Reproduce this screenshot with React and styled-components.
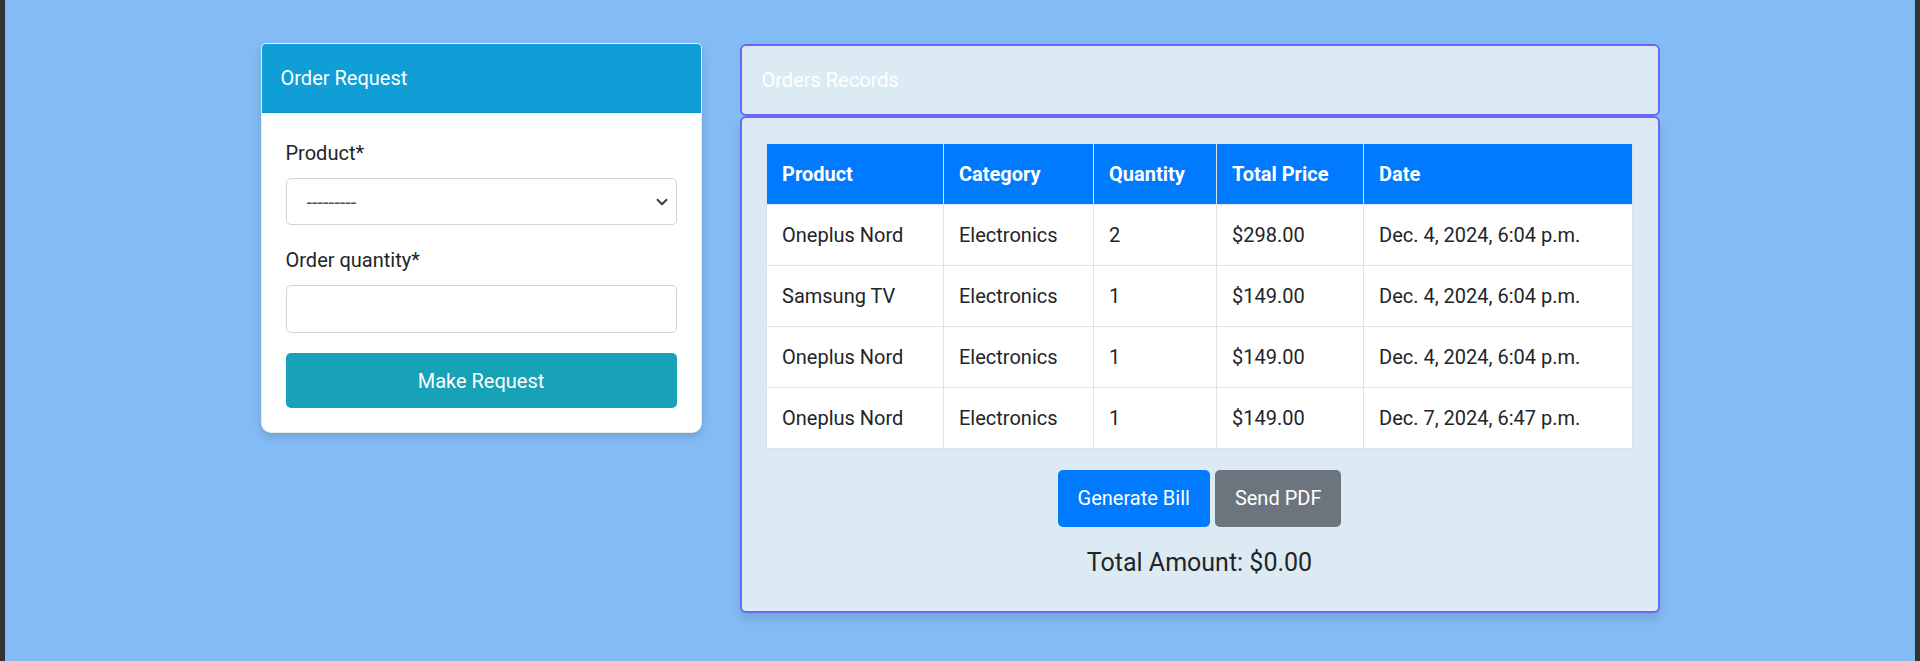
import styled, { createGlobalStyle } from "styled-components";
import { ChevronDown } from "lucide-react";

const GlobalStyle = createGlobalStyle`
  * {
    box-sizing: border-box;
  }

  body {
    margin: 0;
    font-family: Roboto, "Liberation Sans", sans-serif;
    color: #212529;
  }
`;

const Page = styled.div`
  display: flex;
  justify-content: center;
  align-items: flex-start;
  gap: 38px;
  min-height: 100vh;
  padding-top: 43px;
  background: #83bcf4;
  border-left: 5px solid #333333;
  border-right: 5px solid #333333;
`;

const RequestCard = styled.div`
  width: 441px;
  background: #ffffff;
  border: 1px solid rgba(0, 0, 0, 0.08);
  border-radius: 5px 5px 10px 10px;
  box-shadow: 0 4px 10px rgba(0, 0, 0, 0.15);
  overflow: hidden;
`;

const CardHeader = styled.div`
  display: flex;
  align-items: center;
  height: 69px;
  padding: 0 19px;
  background: #0f9ed5;
  border-bottom: 1px solid rgba(0, 0, 0, 0.08);
  color: #ffffff;
  font-size: 20px;
`;

const CardBody = styled.form`
  padding: 25px 24px 24px;
`;

const Label = styled.label`
  display: block;
  margin-bottom: 10px;
  font-size: 20px;
  line-height: 30px;
  color: #212529;
`;

const Field = styled.div`
  position: relative;
  margin-bottom: 20px;
`;

const Select = styled.select`
  display: block;
  width: 100%;
  height: 47px;
  padding: 0 40px 0 20px;
  appearance: none;
  background: #ffffff;
  border: 1px solid #ced4da;
  border-radius: 5px;
  font-family: inherit;
  font-size: 20px;
  color: #495057;
`;

const Chevron = styled(ChevronDown)`
  position: absolute;
  right: 6px;
  top: 50%;
  transform: translateY(-50%);
  color: #343a40;
  pointer-events: none;
`;

const Input = styled.input`
  display: block;
  width: 100%;
  height: 48px;
  padding: 0 15px;
  border: 1px solid #ced4da;
  border-radius: 5px;
  font-family: inherit;
  font-size: 20px;
`;

const Button = styled.button`
  display: inline-flex;
  align-items: center;
  justify-content: center;
  height: ${(p) => p.$height || 57}px;
  width: ${(p) => (p.$block ? "100%" : "auto")};
  padding: 0 20px;
  background: ${(p) => p.$color};
  border: none;
  border-radius: 5px;
  color: #ffffff;
  font-family: inherit;
  font-size: 20px;
  cursor: pointer;
`;

const RecordsColumn = styled.div`
  display: flex;
  flex-direction: column;
  width: 920px;
  margin-top: 1px;
`;

const RecordsHeader = styled.div`
  display: flex;
  align-items: center;
  height: 72px;
  padding: 0 20px;
  background: #dcebf3;
  border: 2px solid #6b68f8;
  border-radius: 6px;
  color: #ffffff;
  font-size: 20px;
`;

const RecordsBody = styled.div`
  display: flex;
  flex-direction: column;
  align-items: center;
  padding: 26px 24px 33px;
  background: #dcebf3;
  border: 2px solid #6b68f8;
  border-radius: 6px;
  box-shadow: 0 6px 10px rgba(0, 0, 0, 0.12);
`;

const Table = styled.table`
  width: 866px;
  border-collapse: collapse;
  table-layout: fixed;
  background: #ffffff;
  font-size: 20px;
`;

const HeadCell = styled.th`
  height: 60px;
  padding: 0 15px;
  background: #007bff;
  border: 1px solid #dee2e6;
  border-top: none;
  color: #ffffff;
  font-weight: 700;
  text-align: left;
`;

const Cell = styled.td`
  height: 61px;
  padding: 0 15px;
  border: 1px solid #dee2e6;
  color: #212529;
`;

const Actions = styled.div`
  display: flex;
  gap: 5px;
  margin-top: 21px;
`;

const Total = styled.div`
  margin-top: 21px;
  font-size: 25px;
  line-height: 30px;
  color: #212529;
`;

const columns = [
  { label: "Product", width: 177 },
  { label: "Category", width: 150 },
  { label: "Quantity", width: 123 },
  { label: "Total Price", width: 147 },
  { label: "Date", width: 269 },
];

const orders = [
  ["Oneplus Nord", "Electronics", "2", "$298.00", "Dec. 4, 2024, 6:04 p.m."],
  ["Samsung TV", "Electronics", "1", "$149.00", "Dec. 4, 2024, 6:04 p.m."],
  ["Oneplus Nord", "Electronics", "1", "$149.00", "Dec. 4, 2024, 6:04 p.m."],
  ["Oneplus Nord", "Electronics", "1", "$149.00", "Dec. 7, 2024, 6:47 p.m."],
];

function App() {
  return (
    <>
      <GlobalStyle />
      <Page>
        <RequestCard>
          <CardHeader>Order Request</CardHeader>
          <CardBody onSubmit={(e) => e.preventDefault()}>
            <Label htmlFor="product">Product*</Label>
            <Field>
              <Select id="product" defaultValue="">
                <option value="">---------</option>
                <option value="1">Oneplus Nord</option>
                <option value="2">Samsung TV</option>
              </Select>
              <Chevron size={18} strokeWidth={2.5} />
            </Field>
            <Label htmlFor="quantity">Order quantity*</Label>
            <Field>
              <Input id="quantity" type="number" />
            </Field>
            <Button type="submit" $block $height={55} $color="#17a2b8">
              Make Request
            </Button>
          </CardBody>
        </RequestCard>

        <RecordsColumn>
          <RecordsHeader>Orders Records</RecordsHeader>
          <RecordsBody>
            <Table>
              <colgroup>
                {columns.map((c) => (
                  <col key={c.label} style={{ width: c.width }} />
                ))}
              </colgroup>
              <thead>
                <tr>
                  {columns.map((c) => (
                    <HeadCell key={c.label}>{c.label}</HeadCell>
                  ))}
                </tr>
              </thead>
              <tbody>
                {orders.map((row, i) => (
                  <tr key={i}>
                    {row.map((value, j) => (
                      <Cell key={j}>{value}</Cell>
                    ))}
                  </tr>
                ))}
              </tbody>
            </Table>
            <Actions>
              <Button $color="#007bff">Generate Bill</Button>
              <Button $color="#6c757d">Send PDF</Button>
            </Actions>
            <Total>Total Amount: $0.00</Total>
          </RecordsBody>
        </RecordsColumn>
      </Page>
    </>
  );
}

export default App;
